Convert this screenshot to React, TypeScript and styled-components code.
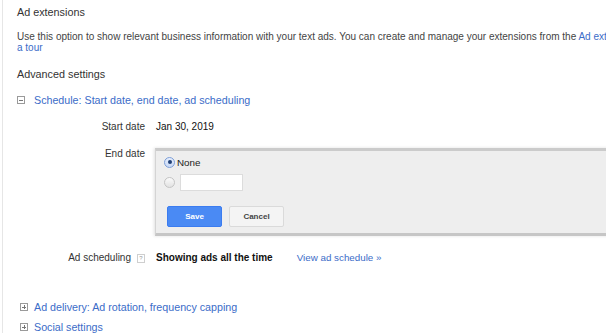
import React from 'react';
import styled, { createGlobalStyle } from 'styled-components';

const GlobalStyle = createGlobalStyle`
  html, body {
    margin: 0;
    padding: 0;
    background: #fff;
  }
  body {
    font-family: "Liberation Sans", Arial, sans-serif;
    color: #333;
    overflow: hidden;
  }
`;

const Page = styled.div`
  margin-left: 2px;
  width: 660px;
  height: 333px;
  border-left: 1px solid #e6e6e6;
  overflow: hidden;
  box-sizing: border-box;
  padding: 5px 0 0 14px;
`;

const Heading = styled.div<{ $mt?: number }>`
  font-size: 10.8px;
  line-height: 14px;
  color: #333;
  margin-top: ${(p) => p.$mt ?? 0}px;
  white-space: nowrap;
`;

const Description = styled.div`
  margin-top: 12px;
  font-size: 10px;
  line-height: 11px;
  color: #444;
  white-space: nowrap;
`;

const Link = styled.a`
  color: #3b6cc8;
  text-decoration: none;
  cursor: pointer;
`;

const Section = styled.div<{ $mt: number }>`
  display: flex;
  align-items: center;
  margin-top: ${(p) => p.$mt}px;
  height: 14px;
  font-size: 10.7px;
  white-space: nowrap;
`;

const ToggleCell = styled.span<{ $inset: number }>`
  display: flex;
  align-items: center;
  width: 17px;
  padding-left: ${(p) => p.$inset}px;
  box-sizing: border-box;
  flex: none;
`;

const Toggle = styled.span<{ $open?: boolean }>`
  position: relative;
  width: 8px;
  height: 8px;
  border: 1px solid #9a9a9a;
  box-sizing: border-box;
  flex: none;

  &::before {
    content: '';
    position: absolute;
    left: 1px;
    right: 1px;
    top: 2.5px;
    height: 1px;
    background: #777;
  }

  &::after {
    content: '';
    display: ${(p) => (p.$open ? 'none' : 'block')};
    position: absolute;
    top: 1px;
    bottom: 1px;
    left: 2.5px;
    width: 1px;
    background: #777;
  }
`;

const FormRow = styled.div<{ $mt: number; $align?: string }>`
  display: grid;
  grid-template-columns: 128px 1fr;
  column-gap: 11px;
  align-items: ${(p) => p.$align ?? 'center'};
  margin-top: ${(p) => p.$mt}px;
  min-height: 14px;
`;

const Label = styled.div`
  display: flex;
  justify-content: flex-end;
  align-items: center;
  gap: 6px;
  font-size: 10px;
  line-height: 14px;
  color: #333;
  white-space: nowrap;
`;

const Value = styled.div<{ $bold?: boolean }>`
  display: flex;
  align-items: center;
  gap: 24px;
  font-size: 10px;
  font-weight: ${(p) => (p.$bold ? 700 : 400)};
  line-height: 14px;
  color: #111;
  white-space: nowrap;
`;

const SmallLink = styled(Link)`
  font-size: 9.8px;
  font-weight: 400;
`;

const Help = styled.span`
  display: inline-flex;
  align-items: center;
  justify-content: center;
  width: 8px;
  height: 9px;
  border: 1px solid #cfcfcf;
  box-sizing: border-box;
  font-size: 6px;
  color: #999;
  line-height: 1;
`;

const Panel = styled.div`
  margin-left: -1px;
  margin-top: 1px;
  width: 500px;
  height: 88px;
  box-sizing: border-box;
  background: #eeeeee;
  border: 1px solid #d4d4d4;
  border-top: 3px solid #cbcbcb;
  border-bottom: 3px solid #c6c6c6;
  box-shadow: -1px 0 3px rgba(0, 0, 0, 0.12);
  padding: 4px 0 0 8px;
`;

const OptionRow = styled.div<{ $mt?: number }>`
  display: flex;
  align-items: center;
  gap: 2px;
  margin-top: ${(p) => p.$mt ?? 0}px;
  height: 14px;
  font-size: 9.8px;
  color: #222;
`;

const Radio = styled.span<{ $checked?: boolean }>`
  position: relative;
  width: 11px;
  height: 11px;
  border-radius: 50%;
  box-sizing: border-box;
  flex: none;
  border: 1px solid ${(p) => (p.$checked ? '#7d9fd8' : '#c4c4c4')};
  background: ${(p) => (p.$checked ? 'linear-gradient(#e6eefc, #c9d9f5)' : 'linear-gradient(#fafafa, #e2e2e2)')};

  &::after {
    content: '';
    display: ${(p) => (p.$checked ? 'block' : 'none')};
    position: absolute;
    left: 50%;
    top: 50%;
    width: 4px;
    height: 4px;
    margin: -2px 0 0 -2px;
    border-radius: 50%;
    background: #1f3f75;
  }
`;

const DateInput = styled.span`
  display: block;
  width: 63px;
  height: 17px;
  background: #fff;
  border: 1px solid #dcdcdc;
  box-sizing: border-box;
  margin-left: 3px;
`;

const Buttons = styled.div`
  display: flex;
  gap: 7px;
  margin-top: 17px;
  margin-left: 3px;
`;

const Button = styled.button<{ $primary?: boolean }>`
  width: 55px;
  height: 21px;
  border-radius: 2px;
  box-sizing: border-box;
  font-family: "Liberation Sans", Arial, sans-serif;
  font-size: 8px;
  font-weight: 700;
  padding: 0;
  cursor: pointer;
  border: 1px solid ${(p) => (p.$primary ? '#3b7cf0' : '#dadada')};
  background: ${(p) => (p.$primary ? '#4a8af4' : '#f4f4f4')};
  color: ${(p) => (p.$primary ? '#fff' : '#444')};
`;

export default function App() {
  return (
    <>
      <GlobalStyle />
      <Page>
        <Heading>Ad extensions</Heading>
        <Description>
          Use this option to show relevant business information with your text ads. You can create and manage your
          extensions from the <Link>Ad extensions tab. Take</Link>
          <br />
          <Link>a tour</Link>
        </Description>

        <Heading $mt={14}>Advanced settings</Heading>

        <Section $mt={12}>
          <ToggleCell $inset={0}>
            <Toggle $open />
          </ToggleCell>
          <Link>Schedule: Start date, end date, ad scheduling</Link>
        </Section>

        <FormRow $mt={13}>
          <Label>Start date</Label>
          <Value>Jan 30, 2019</Value>
        </FormRow>

        <FormRow $mt={13} $align="start">
          <Label>End date</Label>
          <Panel>
            <OptionRow>
              <Radio $checked />
              None
            </OptionRow>
            <OptionRow $mt={6}>
              <Radio />
              <DateInput />
            </OptionRow>
            <Buttons>
              <Button $primary>Save</Button>
              <Button>Cancel</Button>
            </Buttons>
          </Panel>
        </FormRow>

        <FormRow $mt={15}>
          <Label>
            Ad scheduling
            <Help>?</Help>
          </Label>
          <Value $bold>
            Showing ads all the time
            <SmallLink>View ad schedule »</SmallLink>
          </Value>
        </FormRow>

        <Section $mt={35}>
          <ToggleCell $inset={3}>
            <Toggle />
          </ToggleCell>
          <Link>Ad delivery: Ad rotation, frequency capping</Link>
        </Section>
        <Section $mt={6}>
          <ToggleCell $inset={3}>
            <Toggle />
          </ToggleCell>
          <Link>Social settings</Link>
        </Section>
      </Page>
    </>
  );
}
